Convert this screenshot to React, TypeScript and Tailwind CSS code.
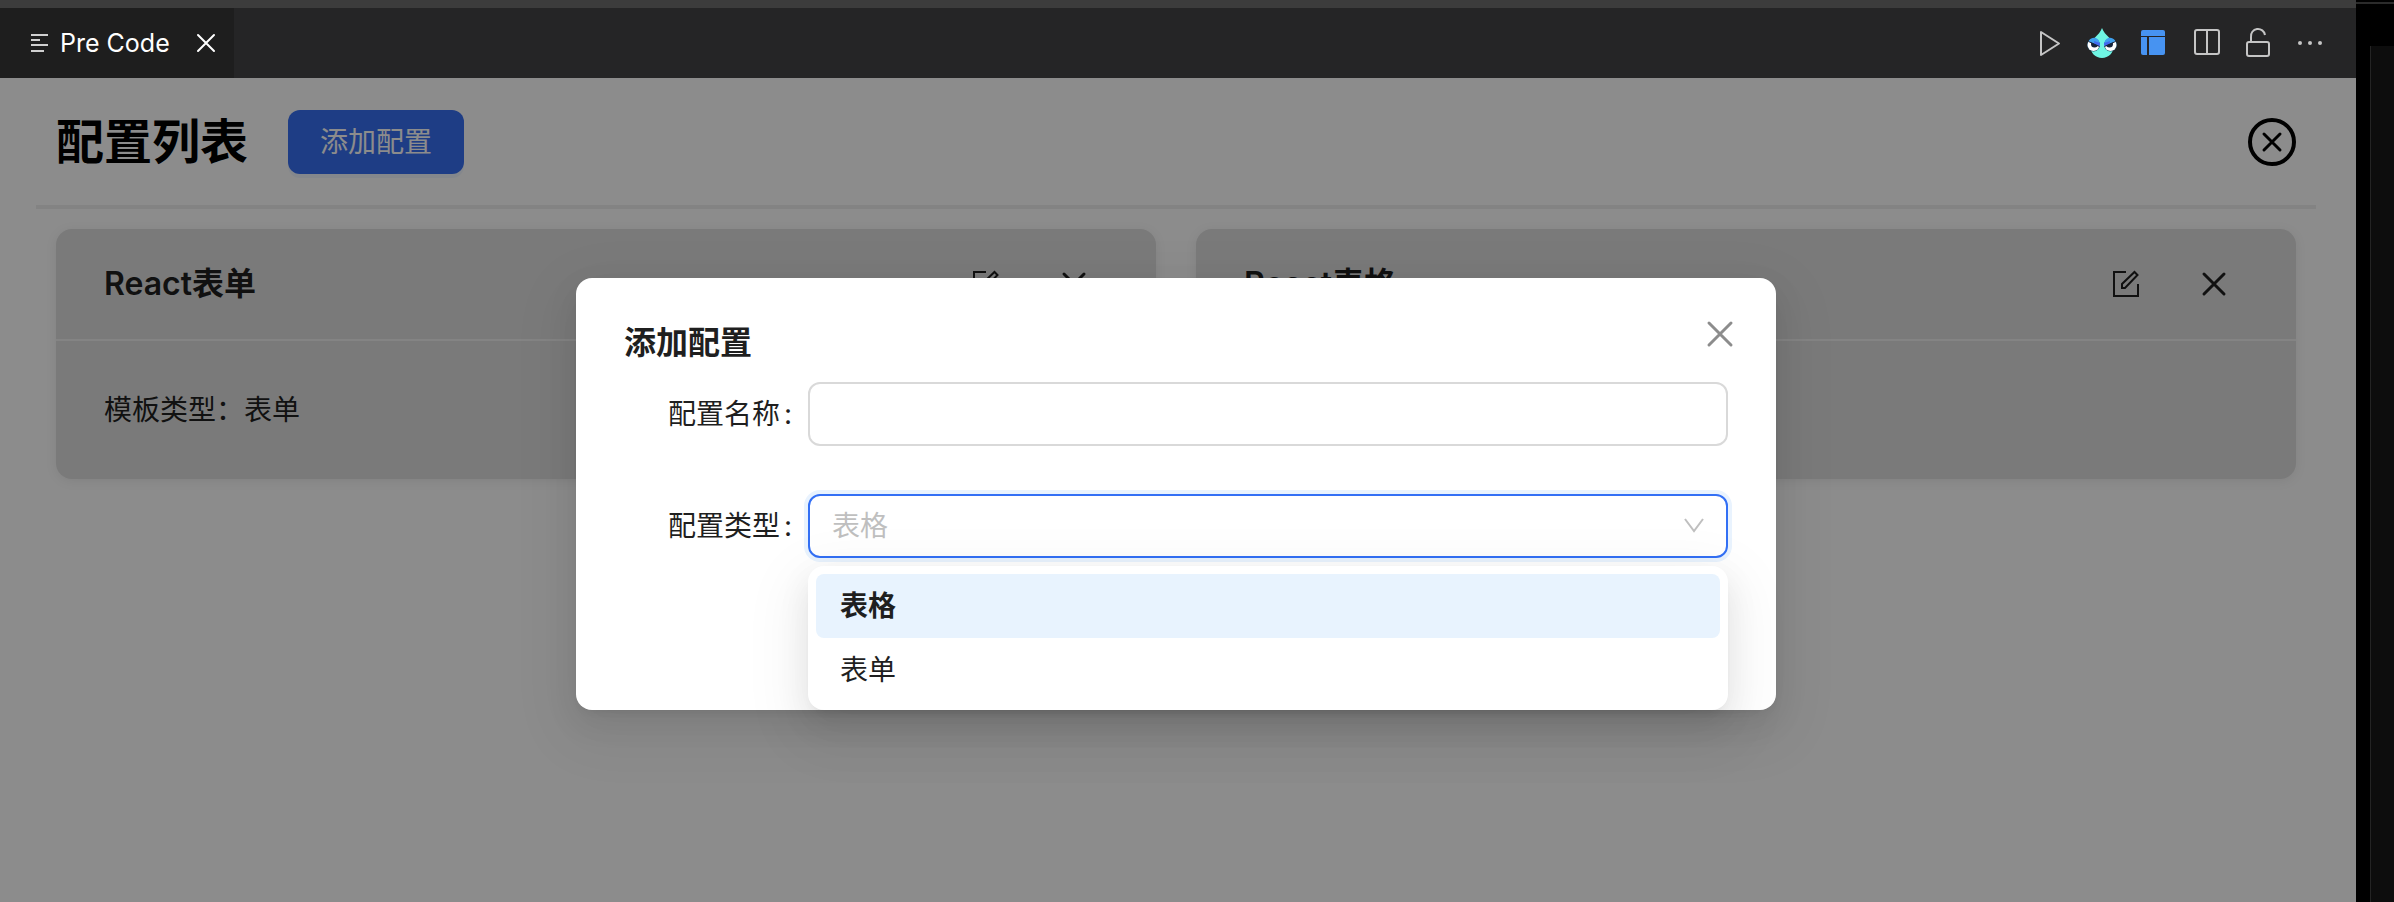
import { useState } from 'react'
import type { ReactNode } from 'react'

const TYPES = ['表格', '表单']

const CARDS = [
  { title: 'React表单', type: '表单' },
  { title: 'React表格', type: '表格' },
]

function IconButton({ label, className = '', children }: { label: string; className?: string; children: ReactNode }) {
  return (
    <button type="button" aria-label={label} className={`flex shrink-0 items-center justify-center ${className}`}>
      {children}
    </button>
  )
}

function OutlineIcon() {
  return (
    <svg width="18" height="20" viewBox="0 0 18 20" stroke="#d0d0d0" strokeWidth="2">
      <path d="M0 2h17M0 7h9M0 12h17M0 18h13" />
    </svg>
  )
}

function CrossIcon({ size, width, color }: { size: number; width: number; color: string }) {
  return (
    <svg width={size} height={size} viewBox={`0 0 ${size} ${size}`} fill="none" stroke={color} strokeWidth={width} strokeLinecap="round">
      <path d={`M${width} ${width}L${size - width} ${size - width}M${size - width} ${width}L${width} ${size - width}`} />
    </svg>
  )
}

function PlayIcon() {
  return (
    <svg width="32" height="32" viewBox="0 0 32 32" fill="none" stroke="#c5c5c5" strokeWidth="2" strokeLinejoin="round">
      <path d="M7 5v23l18-11.5z" />
    </svg>
  )
}

function DropletIcon() {
  return (
    <svg width="32" height="32" viewBox="0 0 32 32">
      <path d="M16 1c-1.500 4-4 6.500-7 9.500-3 3-4.500 5.500-4.500 9C4.500 26 9.500 31 16 31s11.500-5 11.500-11.500c0-3.500-1.500-6-4.500-9C20 7.500 17.500 5 16 1z" fill="#6ff5e3" />
      {[undefined, 'matrix(-1 0 0 1 32 0)'].map((transform) => (
        <g key={transform ?? 'left'} transform={transform}>
          <circle cx="7.500" cy="18" r="6.500" fill="#1d4560" />
          <circle cx="7.500" cy="18" r="6" fill="#fff" />
          <circle cx="8.500" cy="17" r="3.500" fill="#16233b" />
          <path d="M3 13.500c2-3 6-3.500 8.500-1.500 2 1.500 2.500 4 2 7L3 14.500z" fill="#3fa0ee" />
          <path d="M8 14l6 2-.5 3.500-5-2.500z" fill="#4268f0" />
          <path d="M2.500 14.500l11 5" stroke="#16233b" strokeWidth="1" />
        </g>
      ))}
    </svg>
  )
}

function LayoutIcon() {
  return (
    <svg width="32" height="32" viewBox="0 0 32 32" fill="#4793f1">
      <path d="M5 3h20a2 2 0 0 1 2 2v4H3V5a2 2 0 0 1 2-2z" />
      <path d="M3 10h6v18H5a2 2 0 0 1-2-2z" />
      <path d="M11 10h16v16a2 2 0 0 1-2 2H11z" />
    </svg>
  )
}

function SplitIcon() {
  return (
    <svg width="32" height="32" viewBox="0 0 32 32" fill="none" stroke="#c5c5c5" strokeWidth="2">
      <rect x="5" y="3" width="24" height="24" rx="2" />
      <path d="M17 3v24" />
    </svg>
  )
}

function UnlockIcon() {
  return (
    <svg width="32" height="32" viewBox="0 0 32 32" fill="none" stroke="#c5c5c5" strokeWidth="2">
      <rect x="5" y="15" width="22" height="14" rx="2" />
      <path d="M9 15V10a7 7 0 0 1 14-2" />
    </svg>
  )
}

function DotsIcon() {
  return (
    <svg width="32" height="32" viewBox="0 0 32 32" fill="#c5c5c5">
      <circle cx="6" cy="16" r="2" />
      <circle cx="16" cy="16" r="2" />
      <circle cx="26" cy="16" r="2" />
    </svg>
  )
}

function EditIcon() {
  return (
    <svg width="28" height="28" viewBox="0 0 28 28" fill="none" stroke="#1f1f1f" strokeWidth="2">
      <path d="M14 2H2v24h24V14" />
      <path d="M10 18v-4L22.500 2l3 3L13 18z" />
    </svg>
  )
}

function TabBar() {
  return (
    <div className="flex h-[78px] items-stretch border-t-8 border-[#3c3c3c] bg-[#252526]">
      <div className="flex w-[234px] items-center bg-[#1e1e1e] pl-[31px] text-white">
        <OutlineIcon />
        <span className="ml-[11px] text-[25px] leading-8">Pre Code</span>
        <IconButton label="Close tab" className="ml-[26px]">
          <CrossIcon size={20} width={2} color="#ffffff" />
        </IconButton>
      </div>
      <div className="ml-auto flex items-center gap-5 pr-[30px]">
        <IconButton label="Run"><PlayIcon /></IconButton>
        <IconButton label="Assistant"><DropletIcon /></IconButton>
        <IconButton label="Layout"><LayoutIcon /></IconButton>
        <IconButton label="Split editor"><SplitIcon /></IconButton>
        <IconButton label="Unlock group"><UnlockIcon /></IconButton>
        <IconButton label="More actions"><DotsIcon /></IconButton>
      </div>
    </div>
  )
}

function ConfigCard({ title, type }: { title: string; type: string }) {
  return (
    <section className="rounded-2xl bg-[#dedede] text-[#1f1f1f] shadow-[0_2px_12px_rgba(0,0,0,0.08)]">
      <div className="flex h-28 items-center border-b-2 border-[#f0f0f0] px-12">
        <h2 className="text-[32px] leading-[48px] font-semibold">{title}</h2>
        <div className="ml-auto flex gap-8 pr-[6px]">
          <IconButton label="编辑" className="h-14 w-14"><EditIcon /></IconButton>
          <IconButton label="删除" className="h-14 w-14"><CrossIcon size={26} width={3} color="#1f1f1f" /></IconButton>
        </div>
      </div>
      <p className="px-12 py-12 text-[28px] leading-[42px]">模板类型：{type}</p>
    </section>
  )
}

function AddDialog() {
  const [type, setType] = useState('表格')
  const [open, setOpen] = useState(true)
  return (
    <div
      role="dialog"
      aria-label="添加配置"
      className="mx-auto flex min-h-[432px] w-[1200px] max-w-full flex-col rounded-2xl bg-white px-12 pt-8 text-[28px] text-[#1f1f1f] shadow-[0_12px_32px_rgba(0,0,0,0.08),0_6px_12px_-8px_rgba(0,0,0,0.12),0_18px_56px_16px_rgba(0,0,0,0.05)]"
    >
      <div className="flex h-[72px] items-start justify-between">
        <h2 className="pt-2 text-[32px] leading-[50px] font-semibold">添加配置</h2>
        <IconButton label="关闭" className="-mr-4 h-12 w-12">
          <CrossIcon size={28} width={3} color="#8c8c8c" />
        </IconButton>
      </div>
      <form className="flex flex-col gap-12">
        <div className="flex items-center">
          <label htmlFor="name" className="flex w-[184px] shrink-0 justify-end pr-4">
            配置名称<span className="ml-1">:</span>
          </label>
          <input id="name" className="h-16 min-w-0 flex-1 rounded-xl border-2 border-[#d9d9d9] bg-white px-[22px] outline-none" />
        </div>
        <div className="flex items-center">
          <label htmlFor="type" className="flex w-[184px] shrink-0 justify-end pr-4">
            配置类型<span className="ml-1">:</span>
          </label>
          <div className="relative min-w-0 flex-1">
            <select
              id="type"
              value={type}
              onChange={(e) => setType(e.target.value)}
              onMouseDown={(e) => {
                e.preventDefault()
                setOpen(!open)
              }}
              className="block h-16 w-full appearance-none rounded-xl border-2 border-[#3370f5] bg-white px-[22px] text-[#bfbfbf] shadow-[0_0_0_4px_#e9f3fe] outline-none"
            >
              {TYPES.map((t) => (
                <option key={t}>{t}</option>
              ))}
            </select>
            <svg className="pointer-events-none absolute top-6 right-6" width="20" height="16" viewBox="0 0 20 16" fill="none" stroke="#bfbfbf" strokeWidth="2">
              <path d="M1 1l9 12 9-12" />
            </svg>
            {open && (
              <ul
                role="listbox"
                aria-label="配置类型"
                className="absolute top-[72px] right-0 left-0 rounded-2xl bg-white p-2 shadow-[0_12px_32px_rgba(0,0,0,0.08),0_6px_12px_-8px_rgba(0,0,0,0.12),0_18px_56px_16px_rgba(0,0,0,0.05)]"
              >
                {TYPES.map((t) => (
                  <li
                    key={t}
                    role="option"
                    aria-selected={t === type}
                    onClick={() => {
                      setType(t)
                      setOpen(false)
                    }}
                    className={`flex h-16 items-center rounded-lg px-6 ${t === type ? 'bg-[#e8f3fe] font-semibold' : ''}`}
                  >
                    {t}
                  </li>
                ))}
              </ul>
            )}
          </div>
        </div>
      </form>
    </div>
  )
}

export default function App() {
  return (
    <div className="flex min-h-screen bg-black font-['Inter','Noto_Sans_CJK_SC',sans-serif]">
      <main className="flex min-w-0 flex-1 flex-col">
        <TabBar />
        <div className="relative flex-1 bg-white pr-10 pl-9">
          <header className="flex h-[131px] items-center border-b-4 border-[#eeeeee] px-5">
            <h1 className="text-[48px] leading-[64px] font-semibold text-black">配置列表</h1>
            <button type="button" className="ml-10 h-16 rounded-xl bg-[#376ff2] px-8 text-[28px] text-white shadow-[0_4px_0_rgba(5,95,255,0.06)]">
              添加配置
            </button>
            <IconButton label="关闭配置" className="ml-auto h-12 w-12 rounded-full border-4 border-black">
              <CrossIcon size={22} width={3} color="#000000" />
            </IconButton>
          </header>
          <div className="mt-5 grid grid-cols-2 gap-10 px-5">
            {CARDS.map((c) => (
              <ConfigCard key={c.title} {...c} />
            ))}
          </div>
          <div className="absolute inset-0 bg-black/45 pt-[200px] pr-1">
            <AddDialog />
          </div>
        </div>
      </main>
      <aside className="flex w-[38px] shrink-0 flex-col bg-black pt-[2px]">
        <div className="h-11 border-t-2 border-[#2b2b2b]" />
        <div className="ml-[14px] flex-1 border-l border-[#242424] bg-[#0d0d0d]" />
      </aside>
    </div>
  )
}
